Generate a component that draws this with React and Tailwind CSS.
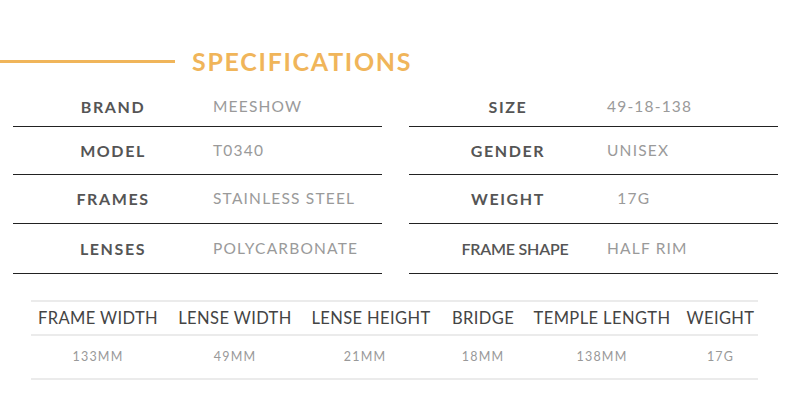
export default function App() {
  const left = [
    ["BRAND", "MEESHOW", "h-[39px]"],
    ["MODEL", "T0340", "h-[48px]"],
    ["FRAMES", "STAINLESS STEEL", "h-[49px]"],
    ["LENSES", "POLYCARBONATE", "h-[50px]"],
  ];
  const right = [
    ["SIZE", "49-18-138", "h-[39px]", false],
    ["GENDER", "UNISEX", "h-[48px]", false],
    ["WEIGHT", "\u00a0\u00a017G", "h-[49px]", false],
    ["FRAME SHAPE", "HALF RIM", "h-[50px]", true],
  ];
  const cols = [
    ["FRAME WIDTH", "133MM", "w-[134px]", ""],
    ["LENSE WIDTH", "49MM", "w-[140px]", ""],
    ["LENSE HEIGHT", "21MM", "w-[132px]", "pr-[12px]"],
    ["BRIDGE", "18MM", "w-[92px]", ""],
    ["TEMPLE LENGTH", "138MM", "w-[146px]", ""],
    ["WEIGHT", "17G", "w-[83px] pl-[8px]", "pl-[6px]"],
  ];
  return (
    <div className="w-[790px] h-[400px] bg-white overflow-hidden" style={{ fontFamily: "Lato, 'Liberation Sans', sans-serif" }}>
      <div className="flex items-center h-[50px] mt-[36px] gap-[17px]">
        <div className="w-[175px] h-[3px] bg-[#f0b55a]" />
        <div className="text-[25px] font-bold tracking-[1.7px] text-[#f0b55a] leading-none">SPECIFICATIONS</div>
      </div>
      <div className="flex gap-[27px] pl-[13px] mt-[2px]">
        <div className="w-[369px]">
          {left.map(([k, v, h]) => (
            <div key={k} className={`flex items-center border-b border-[#222] ${h}`}>
              <div className="w-[200px] text-center text-[16px] font-bold tracking-[1.6px] text-[#555]">{k}</div>
              <div className="text-[15.5px] tracking-[1.2px] text-[#9a9a9a]">{v}</div>
            </div>
          ))}
        </div>
        <div className="w-[369px]">
          {right.map(([k, v, h, tight]) => (
            <div key={k} className={`flex items-center border-b border-[#222] ${h}`}>
              <div className={`w-[198px] text-center text-[16px] text-[#555] ${tight ? "font-semibold tracking-[-0.2px] pl-[14px]" : "font-bold tracking-[1.6px]"}`}>{k}</div>
              <div className="text-[15.5px] tracking-[1.2px] text-[#9a9a9a] whitespace-pre">{v}</div>
            </div>
          ))}
        </div>
      </div>
      <div className="ml-[31px] mt-[26px] w-[727px] border-t-2 border-[#ebebeb]">
        <div className="flex h-[34px] items-center border-b-2 border-[#ebebeb]">
          {cols.map(([k, , w]) => (
            <div key={k} className={`${w} text-center text-[16.5px] tracking-[0.4px] text-[#444] whitespace-nowrap`}>{k}</div>
          ))}
        </div>
        <div className="flex h-[44px] items-center border-b-2 border-[#ebebeb]">
          {cols.map(([k, v, w, adj]) => (
            <div key={k} className={`${w} ${adj} text-center text-[12.5px] tracking-[1.2px] text-[#999]`}>{v}</div>
          ))}
        </div>
      </div>
    </div>
  );
}
